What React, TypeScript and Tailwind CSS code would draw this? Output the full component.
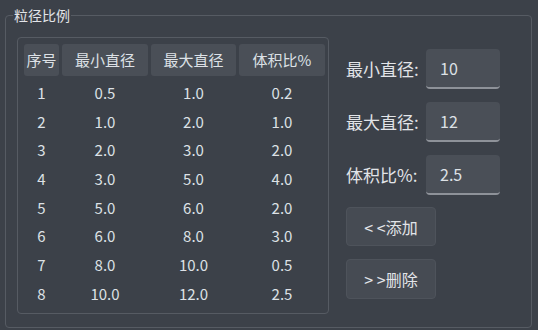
import React from "react";

const rows = [
  ["1", "0.5", "1.0", "0.2"],
  ["2", "1.0", "2.0", "1.0"],
  ["3", "2.0", "3.0", "2.0"],
  ["4", "3.0", "5.0", "4.0"],
  ["5", "5.0", "6.0", "2.0"],
  ["6", "6.0", "8.0", "3.0"],
  ["7", "8.0", "10.0", "0.5"],
  ["8", "10.0", "12.0", "2.5"],
];

const widths = ["w-[35px]", "w-[86px]", "w-[85px]", "w-[86px]"];
const headers = ["序号", "最小直径", "最大直径", "体积比%"];

const font = { fontFamily: '"Noto Sans CJK SC", "Noto Sans", sans-serif' };

export default function App() {
  return (
    <div
      className="w-[538px] h-[330px] bg-[#3c4149] text-[#dde1e6] overflow-hidden pt-[15px] pl-[5px]"
      style={font}
    >
      <div className="relative w-[527px] h-[313px] border border-[#565b63] rounded-[4px] flex pl-[11px] pt-[21px]">
        <span className="absolute left-[7px] top-[-10px] px-[1px] bg-[#3c4149] text-[14px] leading-[18px] text-[#e2e4e8]">
          粒径比例
        </span>

        {/* table */}
        <div className="w-[312px] h-[277px] border border-[#565b63] rounded-[4px] pl-[6px] pt-[6px] shrink-0">
          <div className="flex gap-[3px]">
            {headers.map((h, i) => (
              <div
                key={h}
                className={`${widths[i]} h-[32px] bg-[#4a4f57] rounded-[3px] flex items-center justify-center text-[15px] leading-[20px]`}
              >
                {h}
              </div>
            ))}
          </div>
          <div className="mt-[2.6px]">
            {rows.map((r) => (
              <div key={r[0]} className="flex gap-[3px] h-[28.7px] items-center">
                {r.map((c, i) => (
                  <div
                    key={i}
                    className={`${widths[i]} text-center text-[15px] leading-[20px]`}
                  >
                    {c}
                  </div>
                ))}
              </div>
            ))}
          </div>
        </div>

        {/* right panel */}
        <div className="ml-[17px] pt-[12px] flex flex-col">
          {[
            ["最小直径:", "10"],
            ["最大直径:", "12"],
            ["体积比%:", "2.5"],
          ].map(([l, v], i) => (
            <div key={l} className={`flex items-center h-[40px] ${i > 0 ? "mt-[13px]" : ""}`}>
              <span className="w-[80px] text-[17px] leading-[22px] text-[#e2e4e8]">{l}</span>
              <div className="w-[74px] h-[40px] bg-[#4a4f57] rounded-[4px] border-b-2 border-b-[#8e9299] flex items-center pl-[14px] text-[16px] leading-[20px]">
                {v}
              </div>
            </div>
          ))}
          <button className="mt-[12px] w-[90px] h-[39px] bg-[#464b53] border border-[#4e535b] rounded-[4px] flex items-center justify-center text-[16px] leading-[20px] text-[#e2e4e8] whitespace-pre">
            {"< <添加"}
          </button>
          <button className="mt-[13px] w-[90px] h-[40px] bg-[#464b53] border border-[#4e535b] rounded-[4px] flex items-center justify-center text-[16px] leading-[20px] text-[#e2e4e8] whitespace-pre">
            {"> >删除"}
          </button>
        </div>
      </div>
    </div>
  );
}
